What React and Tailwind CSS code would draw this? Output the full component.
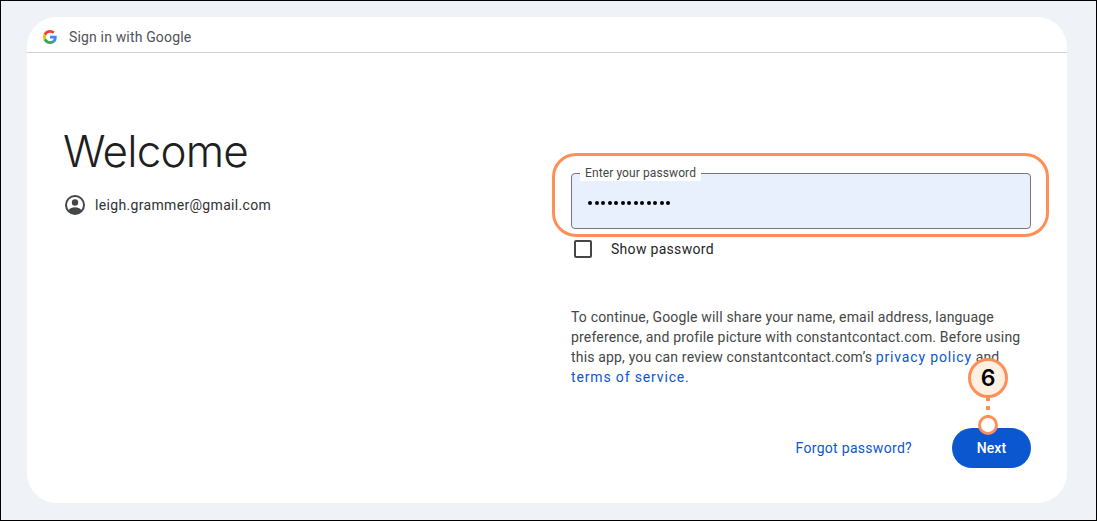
const font = { sans: 'font-["Roboto",sans-serif]' };

function GoogleLogo() {
  return (
    <svg width="14" height="14" viewBox="0 0 48 48">
      <path fill="#EA4335" d="M24 9.5c3.54 0 6.71 1.22 9.21 3.6l6.85-6.85C35.9 2.38 30.47 0 24 0 14.62 0 6.51 5.38 2.56 13.22l7.98 6.19C12.43 13.72 17.74 9.5 24 9.5z" />
      <path fill="#4285F4" d="M46.98 24.55c0-1.57-.15-3.09-.38-4.55H24v9.02h12.94c-.58 2.96-2.26 5.48-4.78 7.18l7.73 6c4.51-4.18 7.09-10.36 7.09-17.65z" />
      <path fill="#FBBC05" d="M10.53 28.59c-.48-1.45-.76-2.99-.76-4.59s.27-3.14.76-4.59l-7.98-6.19C.92 16.46 0 20.12 0 24c0 3.88.92 7.54 2.56 10.78l7.97-6.19z" />
      <path fill="#34A853" d="M24 48c6.48 0 11.93-2.13 15.89-5.81l-7.73-6c-2.15 1.45-4.92 2.3-8.16 2.3-6.26 0-11.57-4.22-13.47-9.91l-7.98 6.19C6.51 42.62 14.62 48 24 48z" />
    </svg>
  );
}

function AccountIcon() {
  return (
    <svg width="20" height="20" viewBox="0 0 20 20">
      <circle cx="10" cy="10" r="9" fill="none" stroke="#444746" strokeWidth="2" />
      <circle cx="10" cy="7.5" r="3.2" fill="#444746" />
      <path fill="#444746" d="M3.6 15.2C5 13 7.4 12.2 10 12.2s5 .8 6.4 3C15 17.4 12.6 18.6 10 18.6s-5-1.2-6.4-3.4z" />
    </svg>
  );
}

export default function App() {
  return (
    <div className={`relative w-[1097px] h-[521px] overflow-hidden bg-[#eff3f8] border border-black px-[26px] pt-4 ${font.sans}`}>
      <div className="h-[486px] w-[1040px] rounded-[30px] bg-white flex flex-col">
        <div className="h-[36px] shrink-0 border-b border-[#cfcfcf] flex items-center gap-3 pl-4 pt-[5px]">
          <GoogleLogo />
          <span className="text-[14px] text-[#4f5357] tracking-[0.16px]">Sign in with Google</span>
        </div>

        <div className="flex flex-1">
          <div className="w-[544px] pl-[36px] pt-[70px]">
            <h1 className='font-["Inter",sans-serif] font-[350] text-[44px] leading-[56px] text-[#1f1f1f] tracking-[-0.8px]'>Welcome</h1>
            <div className="mt-[16px] flex items-center gap-[10px] text-[14px] leading-[20px] text-[#303134] pl-[2px] tracking-[0.33px]">
              <AccountIcon />
              <span>leigh.grammer@gmail.com</span>
            </div>
          </div>

          <div className="w-[460px] pt-[120px]">
            <div className="relative h-[56px] rounded-[4px] border border-[#747775] bg-[#e8f0fe] flex items-center pl-4 pt-[4px]">
              <span className="absolute left-[8px] top-[-9px] bg-white px-[5px] text-[12px] leading-[16px] text-[#444746] tracking-[0.1px]">Enter your password</span>
              <span className="flex gap-[2.5px]">
                {Array.from({ length: 13 }).map((_, i) => (
                  <span key={i} className="w-[4px] h-[4px] rounded-full bg-black" />
                ))}
              </span>
            </div>

            <div className="mt-[10px] ml-[3px] flex items-center gap-[19px]">
              <span className="w-[18px] h-[18px] rounded-[2px] border-2 border-[#444746]" />
              <span className="text-[14px] leading-[20px] text-[#1f1f1f] tracking-[0.3px]">Show password</span>
            </div>

            <p className="mt-[48px] text-[14px] leading-[20px] text-[#444746] tracking-[0.17px]">
              To continue, Google will share your name, email address, language<br />
              preference, and profile picture with constantcontact.com. Before using<br />
              this app, you can review constantcontact.com’s{' '}
              <a className="text-[#0b57d0] tracking-[0.85px]">privacy policy</a> and<br />
              <a className="text-[#0b57d0] tracking-[0.85px]">terms of service</a>.
            </p>

            <div className="mt-[41px] flex items-center justify-end gap-[40px]">
              <a className="text-[14px] text-[#0b57d0] tracking-[0.3px]">Forgot password?</a>
              <button className="w-[79px] h-[40px] rounded-full bg-[#0b57d0] text-white text-[14px] font-medium tracking-[0.1px]">Next</button>
            </div>
          </div>
        </div>
      </div>

      {/* annotation overlays */}
      <div className="absolute left-[551px] top-[152px] w-[497px] h-[84px] rounded-[24px] border-[3px] border-[#ff8f58]" />
      <div className="absolute left-[985px] top-[396px] flex flex-col gap-[5px]">
        <span className="w-[4px] h-[4px] bg-[#ff8f58]" />
        <span className="w-[4px] h-[4px] bg-[#ff8f58]" />
        <span className="w-[4px] h-[4px] bg-[#ff8f58]" />
      </div>
      <div className="absolute left-[967px] top-[357px] w-[40px] h-[40px] rounded-full border-[3px] border-[#ff8f58] bg-[#fff1e1] flex items-center justify-center text-black text-[23px] font-semibold font-['Inter',sans-serif]">6</div>
      <div className="absolute left-[977px] top-[414px] w-[20px] h-[20px] rounded-full border-[3px] border-[#ff8f58] bg-white" />
    </div>
  );
}
